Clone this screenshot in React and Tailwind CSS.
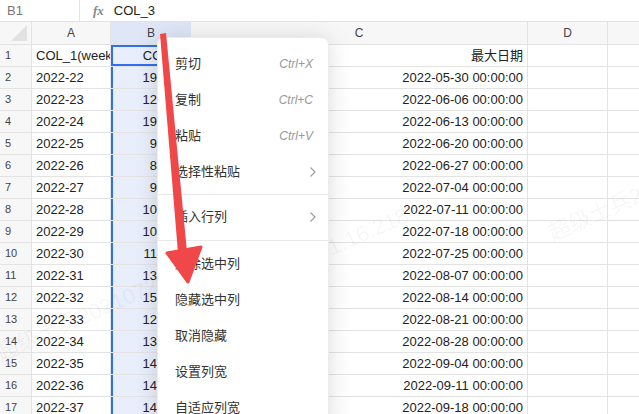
import React from "react";

const weeks = Array.from({ length: 16 }, (_, i) => `2022-${22 + i}`);
const bVals = ["195236", "128741", "193102", "96525", "88413", "91270", "102354", "106893", "114726", "132084", "150317", "127462", "135908", "142183", "148737", "144051"];
const dates = [
  "2022-05-30", "2022-06-06", "2022-06-13", "2022-06-20", "2022-06-27", "2022-07-04",
  "2022-07-11", "2022-07-18", "2022-07-25", "2022-08-07", "2022-08-14", "2022-08-21",
  "2022-08-28", "2022-09-04", "2022-09-11", "2022-09-18",
];

const menu = [
  { label: "剪切", key: "Ctrl+X" },
  { label: "复制", key: "Ctrl+C" },
  { label: "粘贴", key: "Ctrl+V" },
  { label: "选择性粘贴", sub: true, divider: "my-[4px]" },
  { label: "插入行列", sub: true, divider: "my-[5px]" },
  { label: "删除选中列" },
  { label: "隐藏选中列" },
  { label: "取消隐藏" },
  { label: "设置列宽" },
  { label: "自适应列宽" },
];

function Row({ n, a, b, c, first }) {
  return (
    <div className="flex h-[22px] border-b border-[#e3e3e3] text-[13px] text-[#222]">
      <div className="w-[32px] shrink-0 bg-[#f7f7f7] border-r border-[#e3e3e3] pl-[5px] text-[11px] text-[#444] flex items-center">{n}</div>
      <div className="w-[79px] shrink-0 border-r border-[#e3e3e3] pl-[4px] flex items-center overflow-hidden whitespace-nowrap">{a}</div>
      <div className={`w-[80px] shrink-0 bg-[#e8eefb] border-l-2 border-[#2f6ff0] pr-[5px] flex items-center justify-end overflow-hidden whitespace-nowrap ${first ? "border-2 border-[#2f6ff0]" : ""}`}>{b}</div>
      <div className="w-[337px] shrink-0 border-r border-[#e3e3e3] pr-[4px] flex items-center justify-end whitespace-nowrap">{c}</div>
      <div className="w-[80px] shrink-0 border-r border-[#e3e3e3]" />
      <div className="flex-1" />
    </div>
  );
}

export default function App() {
  return (
    <div className="relative w-[639px] h-[414px] overflow-hidden bg-white" style={{ fontFamily: '"Liberation Sans", "Noto Sans CJK SC", sans-serif' }}>
      {/* formula bar */}
      <div className="flex h-[22px] border-b border-[#e3e3e3] items-center">
        <div className="w-[80px] h-full border-r border-[#e3e3e3] pl-[7px] flex items-center text-[13px] text-[#777]">B1</div>
        <div className="pl-[13px] text-[13px] italic text-[#888] font-semibold" style={{ fontFamily: '"Liberation Serif", serif' }}>fx</div>
        <div className="pl-[10px] text-[13px] text-[#222]">COL_3</div>
      </div>
      {/* column header */}
      <div className="flex h-[23px] border-b border-[#e3e3e3] bg-[#f7f7f7] text-[12px] text-[#444]">
        <div className="w-[32px] shrink-0 border-r border-[#e3e3e3] relative">
          <div className="absolute right-[4px] bottom-[3px] w-0 h-0 border-l-[16px] border-l-transparent border-b-[16px] border-b-[#e2e2e2]" />
        </div>
        <div className="w-[79px] shrink-0 border-r border-[#e3e3e3] flex items-center justify-center">A</div>
        <div className="w-[80px] shrink-0 bg-[#dfe6f6] flex items-center justify-center">B</div>
        <div className="w-[337px] shrink-0 border-r border-[#e3e3e3] flex items-center justify-center">C</div>
        <div className="w-[80px] shrink-0 border-r border-[#e3e3e3] flex items-center justify-center">D</div>
        <div className="flex-1" />
      </div>
      <Row n={1} a="COL_1(week" b="COL_2" c="最大日期" first />
      {weeks.map((w, i) => (
        <Row key={w} n={i + 2} a={w} b={bVals[i]} c={`${dates[i]} 00:00:00`} />
      ))}

      {/* watermarks */}
      <div className="pointer-events-none absolute left-[-10px] top-[300px] -rotate-[24deg] text-[22px] text-black/[0.05] whitespace-nowrap">超级士兵20210729</div>
      <div className="pointer-events-none absolute left-[325px] top-[215px] -rotate-[24deg] text-[22px] text-black/[0.05] whitespace-nowrap">1.16.218</div>
      <div className="pointer-events-none absolute left-[545px] top-[195px] -rotate-[24deg] text-[22px] text-black/[0.05] whitespace-nowrap">超级士兵20</div>

      {/* context menu */}
      <div className="absolute left-[157px] top-[37px] w-[172px] bg-white rounded-[7px] shadow-[0_2px_24px_rgba(0,0,0,0.14)] border border-[#ececec] py-[8px] text-[13px] text-[#333]">
        {menu.map((m) => (
          <div key={m.label}>
            <div className="h-[36px] flex items-center justify-between pl-[17px] pr-[15px]">
              <span>{m.label}</span>
              {m.key && <span className="italic text-[12px] text-[#999]">{m.key}</span>}
              {m.sub && (
                <svg width="8" height="12" viewBox="0 0 8 12" className="mr-[-4px]">
                  <path d="M1.5 1.5 L6 6 L1.5 10.5" fill="none" stroke="#999" strokeWidth="1.1" />
                </svg>
              )}
            </div>
            {m.divider && <div className={`h-px bg-[#e8e8e8] ${m.divider}`} />}
          </div>
        ))}
      </div>

      {/* red arrow */}
      <svg className="absolute left-0 top-0 pointer-events-none" width="639" height="414">
        <polygon points="160,34 166,33 187,252 178,253" fill="#f04848" />
        <polygon points="167,253 201,247 188,282" fill="#f04848" strokeLinejoin="round" stroke="#f04848" strokeWidth="3" />
      </svg>
    </div>
  );
}
